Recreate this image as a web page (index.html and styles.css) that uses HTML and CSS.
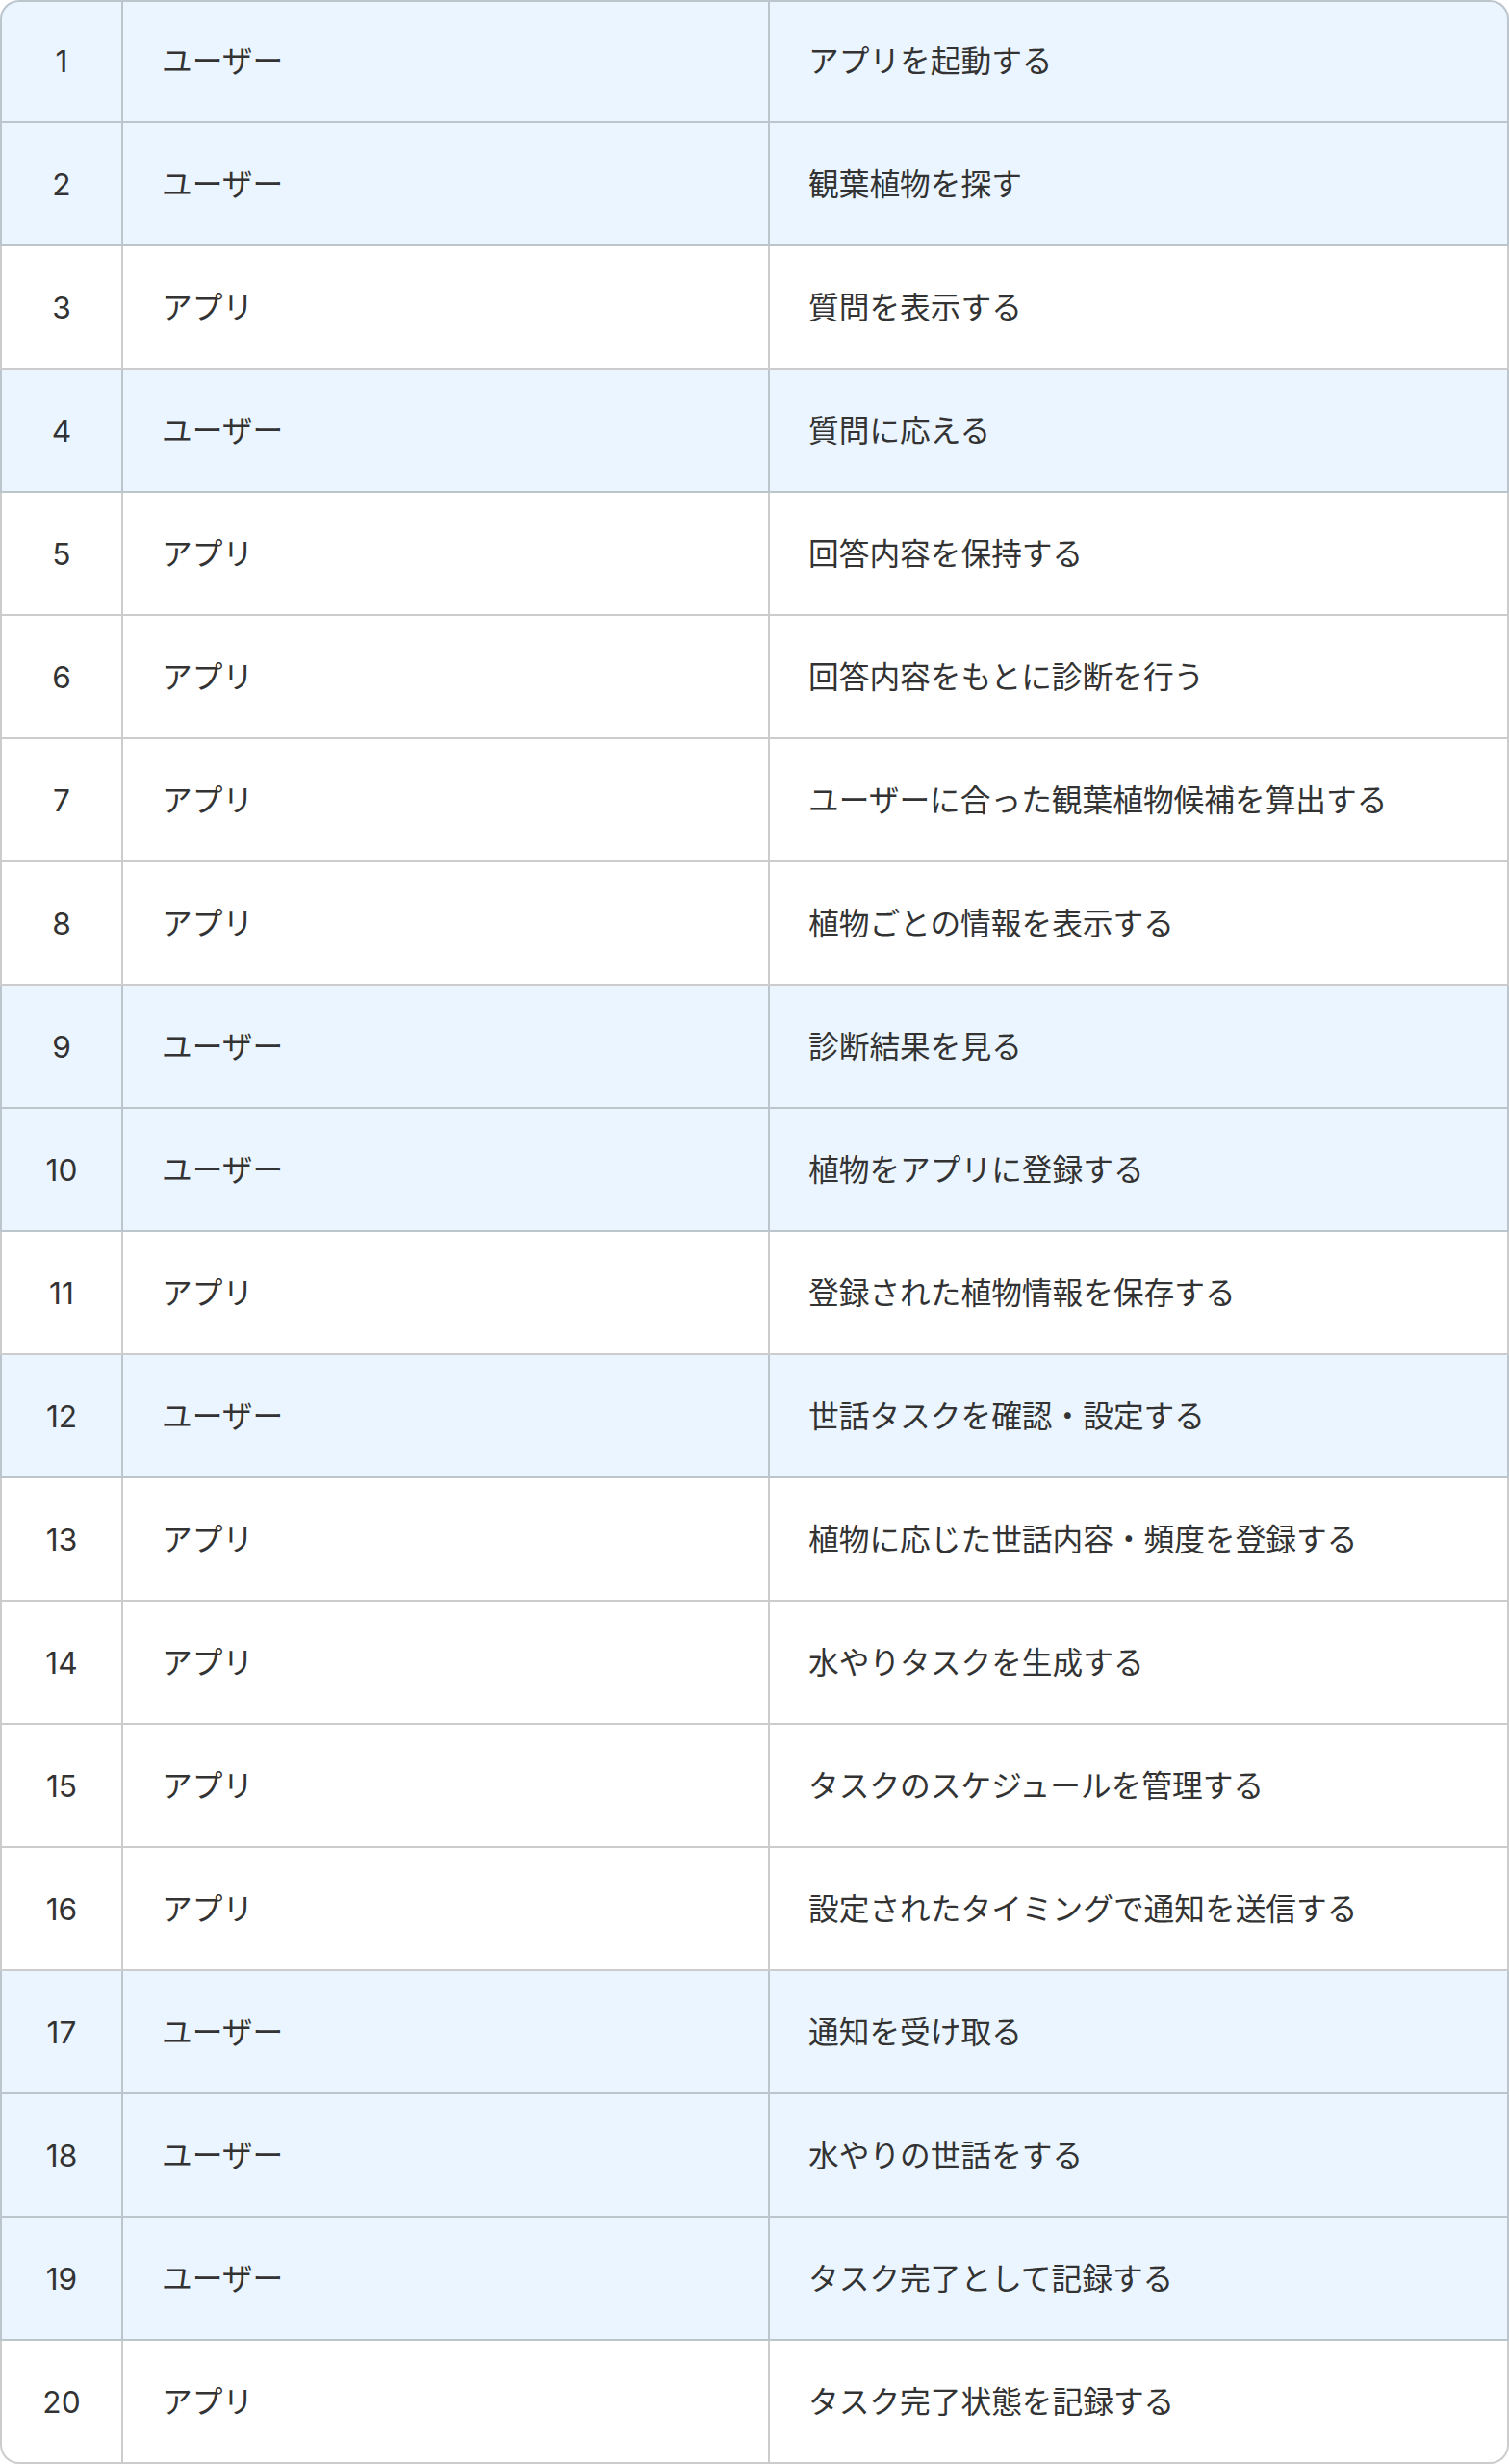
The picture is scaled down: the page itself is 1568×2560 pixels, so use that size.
FILE: index.html
```html
<!DOCTYPE html>
<html lang="ja">
<head>
    <meta charset="UTF-8">
    <title>観葉植物アプリ フロー</title>
    <link rel="stylesheet" href="styles.css">
</head>
<body>

    <table class="flow">
        <colgroup>
            <col class="col-no">
            <col class="col-actor">
            <col class="col-action">
        </colgroup>
        <tbody>
            <tr class="user"><td>1</td><td>ユーザー</td><td>アプリを起動する</td></tr>
            <tr class="user"><td>2</td><td>ユーザー</td><td>観葉植物を探す</td></tr>
            <tr><td>3</td><td>アプリ</td><td>質問を表示する</td></tr>
            <tr class="user"><td>4</td><td>ユーザー</td><td>質問に応える</td></tr>
            <tr><td>5</td><td>アプリ</td><td>回答内容を保持する</td></tr>
            <tr><td>6</td><td>アプリ</td><td>回答内容をもとに診断を行う</td></tr>
            <tr><td>7</td><td>アプリ</td><td>ユーザーに合った観葉植物候補を算出する</td></tr>
            <tr><td>8</td><td>アプリ</td><td>植物ごとの情報を表示する</td></tr>
            <tr class="user"><td>9</td><td>ユーザー</td><td>診断結果を見る</td></tr>
            <tr class="user"><td>10</td><td>ユーザー</td><td>植物をアプリに登録する</td></tr>
            <tr><td>11</td><td>アプリ</td><td>登録された植物情報を保存する</td></tr>
            <tr class="user"><td>12</td><td>ユーザー</td><td>世話タスクを確認・設定する</td></tr>
            <tr><td>13</td><td>アプリ</td><td>植物に応じた世話内容・頻度を登録する</td></tr>
            <tr><td>14</td><td>アプリ</td><td>水やりタスクを生成する</td></tr>
            <tr><td>15</td><td>アプリ</td><td>タスクのスケジュールを管理する</td></tr>
            <tr><td>16</td><td>アプリ</td><td>設定されたタイミングで通知を送信する</td></tr>
            <tr class="user"><td>17</td><td>ユーザー</td><td>通知を受け取る</td></tr>
            <tr class="user"><td>18</td><td>ユーザー</td><td>水やりの世話をする</td></tr>
            <tr class="user"><td>19</td><td>ユーザー</td><td>タスク完了として記録する</td></tr>
            <tr><td>20</td><td>アプリ</td><td>タスク完了状態を記録する</td></tr>
        </tbody>
    </table>

</body>
</html>
```

FILE: styles.css
```css
body {
    margin: 0;
    padding: 0;
    background: #fff;
    font-family: Inter, "Noto Sans CJK JP", sans-serif;
    color: #333;
}

table.flow {
    width: 1568px;
    table-layout: fixed;
    border-collapse: separate;
    border-spacing: 0;
    font-size: 31.7px;
}

.col-no { width: 128px; }
.col-actor { width: 672px; }
.col-action { width: 768px; }

table.flow td {
    box-sizing: border-box;
    padding: 41px 40px 39px;
    line-height: 46px;
    border-right: 2px solid rgba(0, 0, 0, 0.2);
    border-bottom: 2px solid rgba(0, 0, 0, 0.2);
    background: #fff;
    white-space: nowrap;
    vertical-align: middle;
}

table.flow tr.user td {
    background: #ebf5ff;
}

table.flow td:first-child {
    text-align: center;
    padding-left: 0;
    padding-right: 0;
    border-left: 2px solid rgba(0, 0, 0, 0.2);
}

table.flow tr:first-child td {
    border-top: 2px solid rgba(0, 0, 0, 0.2);
    padding-top: 39px;
}

table.flow tr:first-child td:first-child { border-top-left-radius: 20px; }
table.flow tr:first-child td:last-child { border-top-right-radius: 20px; }
table.flow tr:last-child td:first-child { border-bottom-left-radius: 20px; }
table.flow tr:last-child td:last-child { border-bottom-right-radius: 20px; }
```
